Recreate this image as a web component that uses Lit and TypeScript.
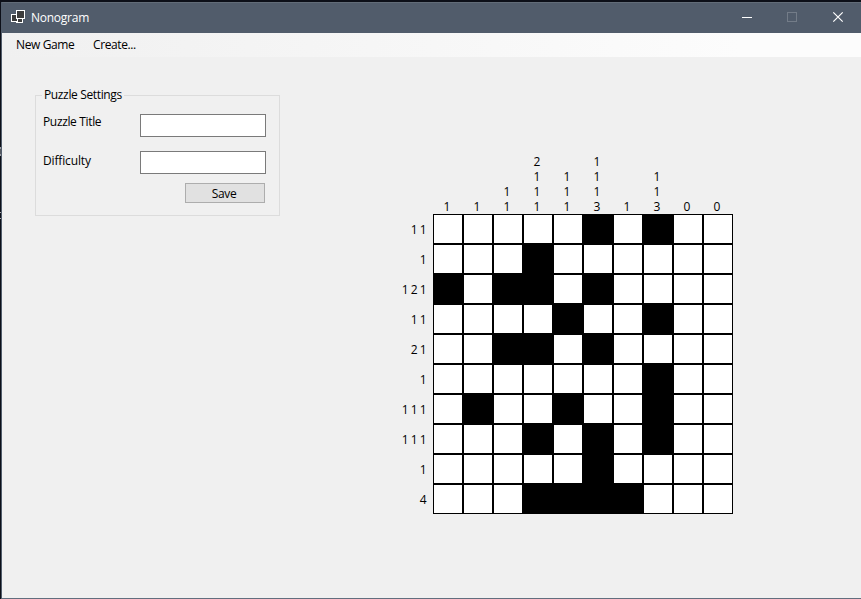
import { LitElement, html, css, svg } from "lit";
import { customElement } from "lit/decorators.js";
import { classMap } from "lit/directives/class-map.js";

const font = css`
  :host {
    display: block;
    font-family: "Open Sans", "Noto Sans", sans-serif;
    font-size: 12px;
    color: #000;
  }
  * {
    box-sizing: border-box;
  }
`;

@customElement("title-bar")
class TitleBar extends LitElement {
  static styles = [
    font,
    css`
      .bar {
        display: flex;
        height: 31px;
        padding-left: 9px;
        background: #515c6b;
        border-top: 1px solid #626c78;
        color: #fff;
      }
      .title {
        flex: 1;
        line-height: 30px;
        padding-left: 4px;
        letter-spacing: -0.25px;
      }
      svg {
        display: block;
      }
      .logo {
        margin-top: 6px;
      }
      .buttons {
        display: flex;
      }
    `,
  ];
  render() {
    return html`<div class="bar">
      <svg class="logo" width="16" height="16" viewBox="0 0 16 16" shape-rendering="crispEdges">
        <g fill="#3c3c3c" stroke="#fff">
          <rect x="5.5" y="8.5" width="6" height="5" />
          <rect x="0.5" y="5.5" width="6" height="7" />
          <rect x="5.5" y="1.5" width="8" height="8" />
        </g>
      </svg>
      <div class="title">Nonogram</div>
      <div class="buttons">
        <svg width="46" height="30" viewBox="0 0 46 30">
          <path d="M19 14.5h10" stroke="#fff" />
        </svg>
        <svg width="45" height="30" viewBox="0 0 45 30">
          <rect x="18.5" y="9.5" width="9" height="9" fill="none" stroke="#737c88" />
        </svg>
        <svg width="47" height="30" viewBox="0 0 47 30">
          <path d="M19.3 9.3l9.4 9.4M28.7 9.3l-9.4 9.4" stroke="#fff" stroke-width="1.2" />
        </svg>
      </div>
    </div>`;
  }
}

@customElement("menu-strip")
class MenuStrip extends LitElement {
  static styles = [
    font,
    css`
      .strip {
        display: flex;
        gap: 19px;
        height: 24px;
        padding-left: 14px;
        line-height: 23px;
        background: linear-gradient(90deg, #f0f0f0, #fcfcfc 86%);
      }
      .new {
        width: 58px;
        white-space: nowrap;
        letter-spacing: -0.38px;
      }
      .create {
        letter-spacing: -0.4px;
      }
    `,
  ];
  render() {
    return html`<div class="strip">
      <span class="new">New Game</span><span class="create">Create...</span>
    </div>`;
  }
}

@customElement("puzzle-settings")
class PuzzleSettings extends LitElement {
  static styles = [
    font,
    css`
      .group {
        width: 245px;
        height: 121px;
        border: 1px solid #dcdcdc;
        padding: 0 13px 0 7px;
      }
      .legend {
        width: 82px;
        height: 18px;
        margin: -10px 0 0 -1px;
        padding-left: 2px;
        line-height: 18px;
        background: #f0f0f0;
        white-space: nowrap;
        letter-spacing: -0.36px;
      }
      .row {
        display: flex;
        justify-content: space-between;
        margin-top: 10px;
      }
      .row + .row {
        margin-top: 14px;
      }
      .label {
        line-height: 16px;
        letter-spacing: -0.35px;
      }
      .row + .row .label {
        padding-top: 2px;
        letter-spacing: -0.15px;
      }
      input {
        width: 126px;
        height: 23px;
        border: 1px solid #7a7a7a;
        border-radius: 0;
        background: #fff;
        outline: none;
      }
      button {
        display: block;
        width: 80px;
        height: 20px;
        margin: 9px 1px 0 auto;
        padding: 2px 2px 0 0;
        border: 1px solid #adadad;
        border-radius: 0;
        background: #e1e1e1;
        color: #000;
        font: inherit;
        line-height: 16px;
        letter-spacing: -0.35px;
      }
    `,
  ];
  render() {
    return html`<div class="group">
      <div class="legend">Puzzle Settings</div>
      <div class="row"><span class="label">Puzzle Title</span><input /></div>
      <div class="row"><span class="label">Difficulty</span><input /></div>
      <button>Save</button>
    </div>`;
  }
}

const COLUMN_CLUES = ["1", "1", "11", "2111", "111", "1113", "1", "113", "0", "0"];
const ROW_CLUES = ["1 1", "1", "1 2 1", "1 1", "2 1", "1", "1 1 1", "1 1 1", "1", "4"];
const BOARD = [
  ".....#.#..",
  "...#......",
  "#.##.#....",
  "....#..#..",
  "..##.#....",
  ".......#..",
  ".#..#..#..",
  "...#.#.#..",
  ".....#....",
  "...####...",
];

@customElement("nonogram-board")
class NonogramBoard extends LitElement {
  static styles = [
    font,
    css`
      .board {
        display: grid;
        grid-template-columns: 40px 300px;
        grid-template-rows: 60px 300px;
      }
      .columns {
        grid-column: 2;
        display: grid;
        grid-template-columns: repeat(10, 30px);
        align-items: end;
      }
      .column {
        width: 28px;
        text-align: center;
        line-height: 15px;
      }
      .rows {
        padding: 1px 7px 0 0;
        line-height: 30px;
        text-align: right;
        letter-spacing: -0.5px;
        white-space: nowrap;
      }
      .cells {
        display: grid;
        grid-template-columns: repeat(10, 30px);
        grid-auto-rows: 30px;
      }
      .cell {
        border: 1px solid #000;
        background: #fff;
      }
      .filled {
        background: #000;
      }
    `,
  ];
  render() {
    return html`<div class="board">
      <div class="columns">
        ${COLUMN_CLUES.map(
          (c) => html`<div class="column">${[...c].map((n) => html`<div>${n}</div>`)}</div>`
        )}
      </div>
      <div class="rows">${ROW_CLUES.map((r) => html`<div>${r}</div>`)}</div>
      <div class="cells">
        ${BOARD.flatMap((r) =>
          [...r].map((c) => html`<div class=${classMap({ cell: true, filled: c === "#" })}></div>`)
        )}
      </div>
    </div>`;
  }
}

@customElement("app-root")
class AppRoot extends LitElement {
  static styles = [
    font,
    css`
      .desktop {
        display: flex;
        width: 861px;
        height: 599px;
        padding-top: 2px;
        background: #0c0f18;
        overflow: hidden;
      }
      .behind {
        width: 1px;
        height: 597px;
        display: block;
      }
      .window {
        width: 860px;
        height: 597px;
        border-left: 1px solid #515c6b;
        border-bottom: 1px solid #626e7e;
        background: #f0f0f0;
      }
      .content {
        display: flex;
        align-items: flex-start;
      }
      puzzle-settings {
        margin: 38px 0 0 33px;
      }
      nonogram-board {
        margin: 97px 0 0 113px;
      }
    `,
  ];
  render() {
    return html`<div class="desktop">
      <svg class="behind" width="1" height="597" shape-rendering="crispEdges">
        ${svg`<rect y="145" width="1" height="9" fill="#555961" />
        <rect y="145" width="1" height="2" fill="#9a9da3" />
        <rect y="152" width="1" height="2" fill="#9a9da3" />
        <rect y="210" width="1" height="1" fill="#a9a9ae" />
        <rect y="216" width="1" height="1" fill="#a9a9ae" />`}
      </svg>
      <div class="window">
        <title-bar></title-bar>
        <menu-strip></menu-strip>
        <div class="content">
          <puzzle-settings></puzzle-settings>
          <nonogram-board></nonogram-board>
        </div>
      </div>
    </div>`;
  }
}
